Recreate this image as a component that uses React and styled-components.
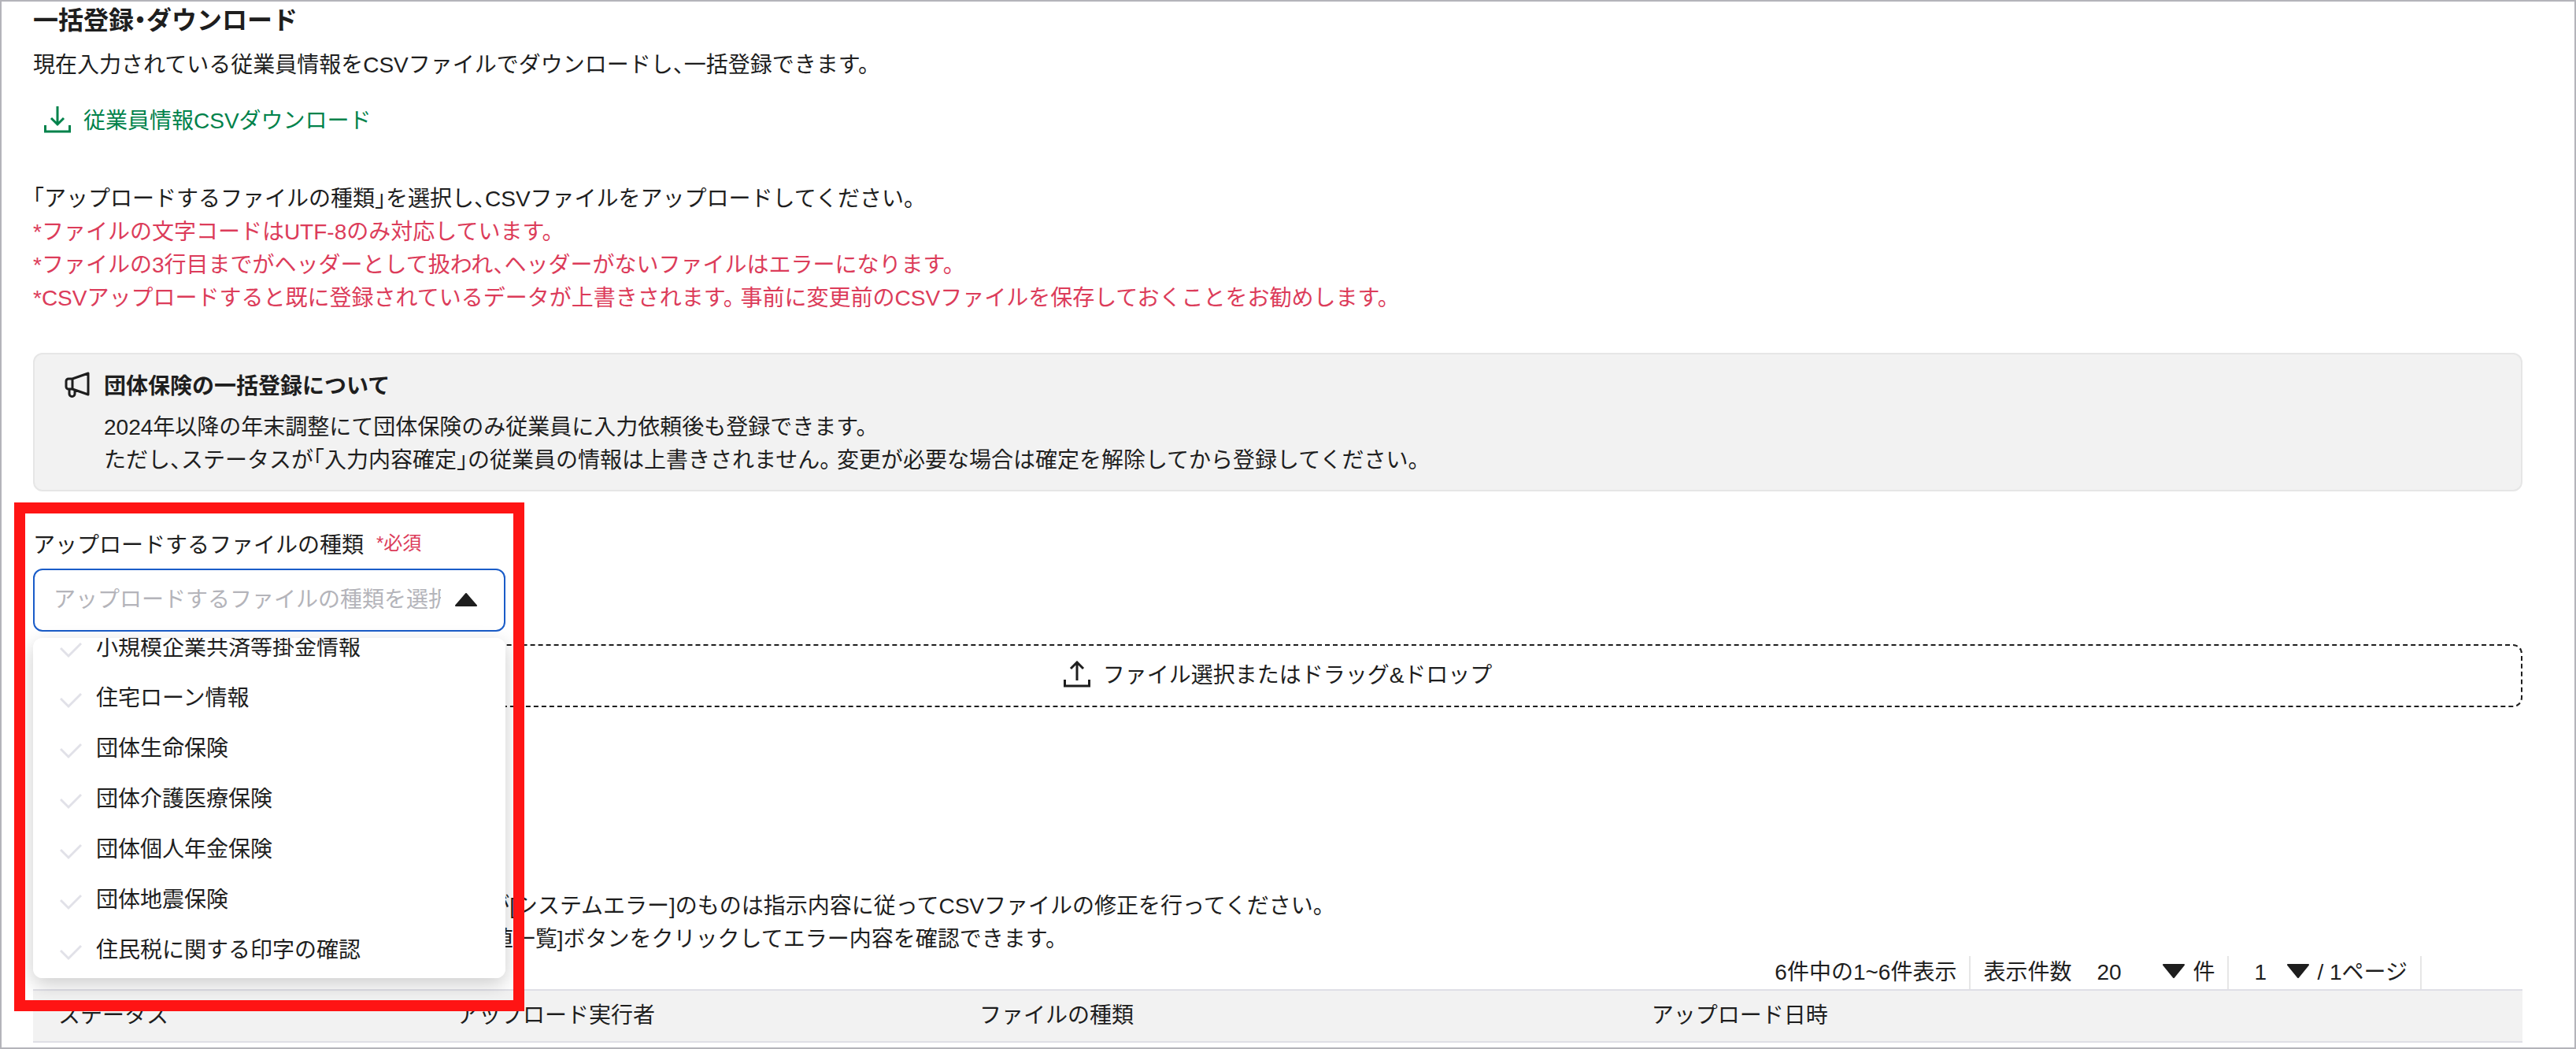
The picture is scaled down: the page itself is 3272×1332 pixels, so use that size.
import { useLayoutEffect, useRef } from "react"
import styled, { createGlobalStyle } from "styled-components"

const GlobalStyle = createGlobalStyle`
    * {
        box-sizing: border-box;
        margin: 0;
        padding: 0;
    }

    body {
        background-color: #fff;
        color: #1e1e1e;
        font-family: "Liberation Sans", "Noto Sans CJK JP", sans-serif;
        font-size: 28px;
        line-height: 42px;
        font-feature-settings: "halt";
    }

    button, input, select {
        font: inherit;
        font-feature-settings: inherit;
        color: inherit;
        background: none;
        border: none;
        outline: none;
    }
`

const Pagina = styled.main`
    min-height: 100vh;
    padding: 0 66px 6px 40px;
    border: 2px solid #b4b4ba;
`

const Titulo = styled.h1`
    font-size: 32px;
    line-height: 48px;
`

const Texto = styled.p`
    margin-top: ${({ $topo }) => $topo || 0}px;
    color: ${({ $alerta }) => ($alerta ? "#dc3c5a" : "inherit")};
`

const BotaoDownload = styled.button`
    display: flex;
    align-items: center;
    gap: 16px;
    height: 56px;
    margin-top: 22px;
    padding: 0 14px;
    color: #00824b;
    cursor: pointer;
`

const Instrucoes = styled.section`
    margin-top: 50px;
`

const Aviso = styled.section`
    display: flex;
    gap: 16px;
    margin-top: 48px;
    padding: 20px 36px 16px;
    background-color: #f2f2f2;
    border: 2px solid #e6e6e6;
    border-radius: 12px;
`

const AvisoTitulo = styled.h2`
    margin-bottom: 10px;
    font-size: 28px;
    line-height: 42px;
`

const IconeAviso = styled.div`
    display: flex;
    align-items: center;
    height: 38px;
`

const Campo = styled.div`
    position: relative;
    width: 600px;
    margin-top: 48px;
`

const Destaque = styled.div`
    position: absolute;
    inset: -34px -24px -482px -24px;
    z-index: 3;
    border: 14px solid #ff1414;
    pointer-events: none;
`

const Rotulo = styled.label`
    display: flex;
    gap: 16px;
    margin-bottom: 8px;
`

const Obrigatorio = styled.span`
    font-size: 24px;
    line-height: 36px;
    color: #dc3c5a;
`

const CaixaSelecao = styled.div`
    display: flex;
    align-items: center;
    gap: 18px;
    height: 80px;
    padding: 0 34px 0 24px;
    border: 2px solid #1a5cc8;
    border-radius: 12px;
`

const EntradaSelecao = styled.input`
    flex: 1;
    min-width: 0;

    &::placeholder {
        color: #b4b4ba;
        opacity: 1;
    }
`

const Lista = styled.ul`
    position: absolute;
    top: calc(100% + 8px);
    left: 0;
    right: 0;
    z-index: 2;
    max-height: 432px;
    padding: 4px 0;
    overflow-y: auto;
    scrollbar-width: none;
    list-style: none;
    background-color: #fff;
    border-radius: 12px;
    box-shadow: 0 8px 24px rgba(0, 0, 0, .2);
`

const Opcao = styled.li`
    display: flex;
    align-items: center;
    gap: 18px;
    height: 64px;
    padding: 2px 34px 0;
    cursor: pointer;
`

const AreaArquivo = styled.label`
    display: flex;
    align-items: center;
    justify-content: center;
    gap: 16px;
    height: 80px;
    margin-top: 16px;
    border: 2px dashed #1e1e1e;
    border-radius: 12px;
    cursor: pointer;
`

const EntradaArquivo = styled.input`
    position: absolute;
    width: 1px;
    height: 1px;
    opacity: 0;
`

const Historico = styled.section`
    margin-top: 232px;
`

const Paginacao = styled.div`
    display: flex;
    justify-content: flex-end;
    padding-right: 128px;
`

const ItemPaginacao = styled.div`
    display: flex;
    align-items: center;
    gap: 10px;
    height: 42px;
    padding: 0 16px;
    border-right: 2px solid #e6e6e6;
`

const RotuloPagina = styled.label`
    padding-right: 6px;
`

const CaixaNumero = styled.span`
    display: grid;
    align-items: center;
    justify-items: end;
    width: ${({ $largura }) => $largura}px;
    height: 42px;
    padding-bottom: 4px;

    & > * {
        grid-area: 1 / 1;
    }
`

const SelecaoNumero = styled.select`
    width: 100%;
    height: 38px;
    padding: 0 16px;
    appearance: none;
`

const Tabela = styled.table`
    width: 100%;
    table-layout: fixed;
    border-collapse: separate;
    border-spacing: 0;
`

const Cabecalho = styled.th`
    width: ${({ $largura }) => $largura};
    height: 68px;
    padding: 0 32px;
    background-color: #f2f2f2;
    border-top: 2px solid #dfdfe6;
    border-bottom: 2px solid #dfdfe6;
    font-weight: 400;
    text-align: left;
`

const IconeSeta = ({ paraCima }) => (
    <svg width="34" height="38" viewBox="0 0 34 38" fill="none" stroke="currentColor" strokeWidth="3">
        <path d={paraCima ? "M17 25V2M9 10l8-8 8 8" : "M17 0v23M9 15l8 8 8-8"} />
        <path d="M1.5 24v8h31v-8" />
    </svg>
)

const IconeMegafone = () => (
    <svg width="36" height="36" viewBox="0 0 36 36" fill="none" stroke="currentColor" strokeWidth="3" strokeLinejoin="round">
        <path d="M12 10L32 3v27L12 23H7a3 3 0 0 1-3-3v-7a3 3 0 0 1 3-3zM12 10v13M8 23v6a3.5 3.5 0 0 0 7 0v-4" />
    </svg>
)

const IconeTriangulo = ({ paraCima }) => (
    <svg width="28" height="18" viewBox="0 0 28 18" fill="#1e1e1e" stroke="#1e1e1e" strokeWidth="2" strokeLinejoin="round">
        <path d={paraCima ? "M14 1L27 16H1z" : "M1 1h26L14 17z"} />
    </svg>
)

const IconeCheck = () => (
    <svg width="28" height="28" viewBox="0 0 28 28" fill="none" stroke="#e1e1e8" strokeWidth="3">
        <path d="M1 14l10 10L27 8" />
    </svg>
)

const opcoes = [
    "小規模企業共済等掛金情報",
    "住宅ローン情報",
    "団体生命保険",
    "団体介護医療保険",
    "団体個人年金保険",
    "団体地震保険",
    "住民税に関する印字の確認",
]

const colunas = [
    { nome: "ステータス", largura: "16%" },
    { nome: "アップロード実行者", largura: "21%" },
    { nome: "ファイルの種類", largura: "27%" },
    { nome: "アップロード日時", largura: "36%" },
]

const SelecaoTipo = () => {
    const lista = useRef(null)

    useLayoutEffect(() => {
        lista.current.scrollTop = lista.current.scrollHeight
    }, [])

    return (
        <Campo>
            <Rotulo htmlFor="tipoArquivo">
                アップロードするファイルの種類
                <Obrigatorio>*必須</Obrigatorio>
            </Rotulo>
            <CaixaSelecao>
                <EntradaSelecao
                    id="tipoArquivo"
                    role="combobox"
                    aria-expanded="true"
                    aria-controls="listaTipos"
                    placeholder="アップロードするファイルの種類を選択"
                />
                <IconeTriangulo paraCima />
            </CaixaSelecao>
            <Lista id="listaTipos" role="listbox" ref={lista}>
                {opcoes.map((opcao) => (
                    <Opcao key={opcao} role="option" aria-selected="false">
                        <IconeCheck />
                        {opcao}
                    </Opcao>
                ))}
            </Lista>
            <Destaque />
        </Campo>
    )
}

const App = () => {
    return (
        <>
            <GlobalStyle />
            <Pagina>
                <Titulo>一括登録・ダウンロード</Titulo>
                <Texto $topo={12}>現在入力されている従業員情報をCSVファイルでダウンロードし、一括登録できます。</Texto>
                <BotaoDownload type="button">
                    <IconeSeta />
                    従業員情報CSVダウンロード
                </BotaoDownload>

                <Instrucoes>
                    <Texto>「アップロードするファイルの種類」を選択し、CSVファイルをアップロードしてください。</Texto>
                    <Texto $alerta>*ファイルの文字コードはUTF-8のみ対応しています。</Texto>
                    <Texto $alerta>*ファイルの3行目までがヘッダーとして扱われ、ヘッダーがないファイルはエラーになります。</Texto>
                    <Texto $alerta>*CSVアップロードすると既に登録されているデータが上書きされます。 事前に変更前のCSVファイルを保存しておくことをお勧めします。</Texto>
                </Instrucoes>

                <Aviso>
                    <IconeAviso>
                        <IconeMegafone />
                    </IconeAviso>
                    <div>
                        <AvisoTitulo>団体保険の一括登録について</AvisoTitulo>
                        <Texto>2024年以降の年末調整にて団体保険のみ従業員に入力依頼後も登録できます。</Texto>
                        <Texto>ただし、ステータスが「入力内容確定」の従業員の情報は上書きされません。 変更が必要な場合は確定を解除してから登録してください。</Texto>
                    </div>
                </Aviso>

                <SelecaoTipo />

                <AreaArquivo>
                    <EntradaArquivo type="file" accept=".csv" />
                    <IconeSeta paraCima />
                    ファイル選択またはドラッグ&amp;ドロップ
                </AreaArquivo>

                <Historico>
                    <Texto>CSVファイルの[処理結果]及びそのステータスが[システムエラー]のものは指示内容に従ってCSVファイルの修正を行ってください。</Texto>
                    <Texto>ステータスが入力エラーのファイルは、[エラー値一覧]ボタンをクリックしてエラー内容を確認できます。</Texto>
                    <Paginacao>
                        <ItemPaginacao>6件中の1~6件表示</ItemPaginacao>
                        <ItemPaginacao>
                            <RotuloPagina htmlFor="porPagina">表示件数</RotuloPagina>
                            <CaixaNumero $largura={128}>
                                <SelecaoNumero id="porPagina" defaultValue="20">
                                    <option>20</option>
                                    <option>50</option>
                                </SelecaoNumero>
                                <IconeTriangulo />
                            </CaixaNumero>
                            件
                        </ItemPaginacao>
                        <ItemPaginacao>
                            <CaixaNumero $largura={86}>
                                <SelecaoNumero aria-label="ページ" defaultValue="1">
                                    <option>1</option>
                                </SelecaoNumero>
                                <IconeTriangulo />
                            </CaixaNumero>
                            / 1ページ
                        </ItemPaginacao>
                    </Paginacao>
                    <Tabela>
                        <thead>
                            <tr>
                                {colunas.map(({ nome, largura }) => (
                                    <Cabecalho key={nome} scope="col" $largura={largura}>{nome}</Cabecalho>
                                ))}
                            </tr>
                        </thead>
                    </Tabela>
                </Historico>
            </Pagina>
        </>
    )
}

export default App
